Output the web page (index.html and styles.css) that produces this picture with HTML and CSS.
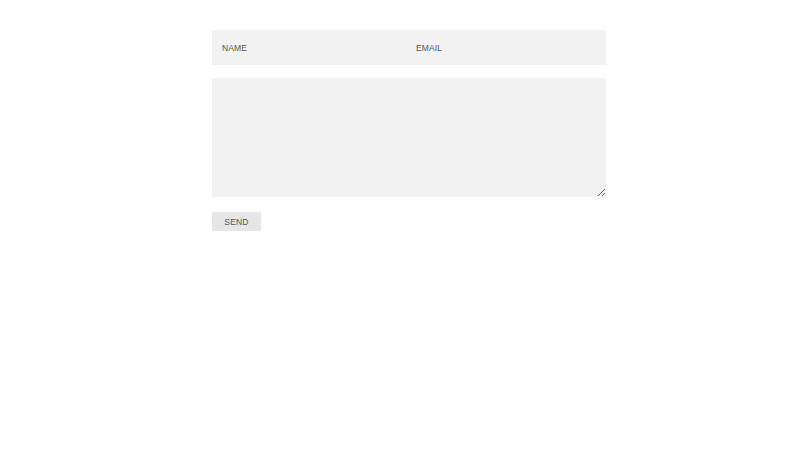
FILE: index.html
```html
<!DOCTYPE html>
<html>
<head>
<meta charset="utf-8">
<link rel="stylesheet" href="styles.css">
</head>
<body>
<form class="contact">
  <div class="row">
    <input class="field" type="text" placeholder="NAME">
    <input class="field" type="email" placeholder="EMAIL">
  </div>
  <textarea class="message"></textarea>
  <button class="send" type="button">SEND</button>
</form>
</body>
</html>
```
FILE: styles.css
```css
html, body {
  margin: 0;
  padding: 0;
  background: #ffffff;
}
body {
  font-family: "Liberation Sans", Arial, sans-serif;
}
.contact {
  width: 394px;
  margin: 30px 0 0 212px;
  display: flex;
  flex-direction: column;
  align-items: flex-start;
}
.row {
  display: grid;
  grid-template-columns: 194px 200px;
  width: 394px;
  height: 35px;
  background: #f2f2f2;
}
.field {
  border: 0;
  outline: 0;
  background: #f2f2f2;
  padding: 1px 10px 0 10px;
  margin: 0;
  height: 35px;
  box-sizing: border-box;
  font-family: "Liberation Sans", Arial, sans-serif;
  font-size: 8.5px;
  font-weight: 400;
  letter-spacing: 0.1px;
  color: #444;
  min-width: 0;
}
.field::placeholder {
  color: #555;
  opacity: 1;
}
.message {
  display: block;
  margin: 13px 0 0 0;
  width: 394px;
  height: 119px;
  box-sizing: border-box;
  border: 0;
  outline: 0;
  background: #f2f2f2;
  padding: 10px;
  font-family: "Liberation Sans", Arial, sans-serif;
  font-size: 9px;
}
.send {
  margin: 15px 0 0 0;
  width: 49px;
  height: 19px;
  padding: 1px 0 0 0;
  border: 0;
  background: #e6e6e6;
  color: #555;
  font-family: "Liberation Sans", Arial, sans-serif;
  font-size: 8.5px;
  font-weight: 400;
  letter-spacing: 0.2px;
  cursor: pointer;
}
```
